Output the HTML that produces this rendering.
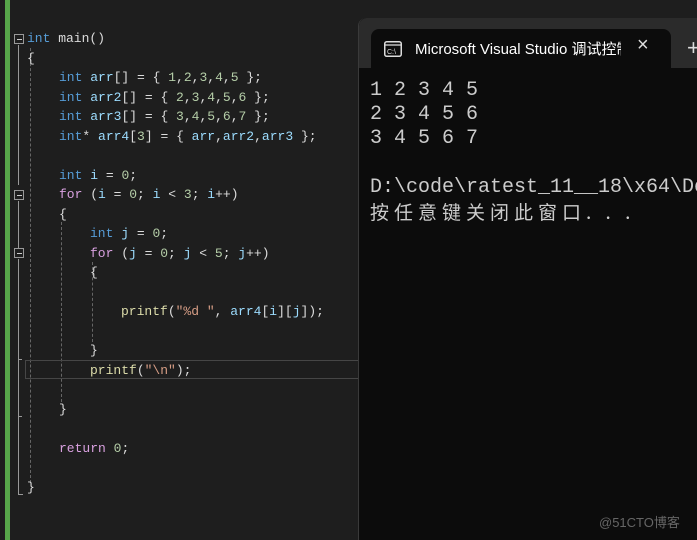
<!DOCTYPE html>
<html><head><meta charset="utf-8"><style>
body{margin:0;width:697px;height:540px;background:#1e1e1e;overflow:hidden;position:relative;font-family:"Liberation Mono","Noto Sans CJK SC",monospace}
.g{position:absolute;left:5px;top:0;width:5px;height:540px;background:#57a64a}
.l{position:absolute;font-size:13px;line-height:19.5px;white-space:pre;color:#dcdcdc}
.k{color:#569cd6}.v{color:#9cdcfe}.n{color:#b5cea8}.c{color:#d8a0df}.f{color:#dcdcaa}.s{color:#d69d85}
.fb{position:absolute;left:14px;width:8px;height:8px;border:1px solid #999;box-sizing:content-box}
.fb:after{content:"";position:absolute;left:2px;top:4px;width:5px;height:1px;background:#ccc}
.vl{position:absolute;width:1px;background:#999}
.dl{position:absolute;width:0;border-left:1px dashed #666}
.win{position:absolute;left:358px;top:18px;width:339px;height:522px;background:#0c0c0c;border-left:1px solid #3a3a3a;border-radius:8px 0 0 0;overflow:hidden}
.tb{position:absolute;left:0;top:0;right:0;height:50px;background:#2b2b2b;border-radius:8px 0 0 0}
.tab{position:absolute;left:12px;top:11px;width:300px;height:39px;background:#0c0c0c;border-radius:8px 8px 0 0}
.t{position:absolute;left:11px;font-size:20px;line-height:24px;color:#cccccc;white-space:pre}
</style></head><body>
<div class="g"></div>
<div class="fb" style="top:34px"></div>
<div class="vl" style="left:18px;top:45px;height:140px"></div>
<div class="fb" style="top:190px"></div>
<div class="vl" style="left:18px;top:201px;height:48px"></div>
<div class="fb" style="top:248px"></div>
<div class="vl" style="left:18px;top:259px;height:100px"></div>
<div style="position:absolute;left:18px;top:359px;width:4px;height:1px;background:#999"></div>
<div class="vl" style="left:18px;top:359px;height:58px"></div>
<div style="position:absolute;left:18px;top:416px;width:4px;height:1px;background:#999"></div>
<div class="vl" style="left:18px;top:416px;height:78px"></div>
<div style="position:absolute;left:18px;top:494px;width:5px;height:1px;background:#999"></div>
<div class="dl" style="left:30px;top:48px;height:435px"></div>
<div class="dl" style="left:61px;top:222px;height:180px"></div>
<div class="dl" style="left:92px;top:262px;height:80px"></div>
<div style="position:absolute;left:25px;top:360px;width:340px;height:17px;border:1px solid #464646"></div>
<div class="l" style="left:27px;top:29px"><span class="k">int</span> main()</div>
<div class="l" style="left:27px;top:48.5px">{</div>
<div class="l" style="left:59px;top:68px"><span class="k">int</span> <span class="v">arr</span>[] = { <span class="n">1</span>,<span class="n">2</span>,<span class="n">3</span>,<span class="n">4</span>,<span class="n">5</span> };</div>
<div class="l" style="left:59px;top:87.5px"><span class="k">int</span> <span class="v">arr2</span>[] = { <span class="n">2</span>,<span class="n">3</span>,<span class="n">4</span>,<span class="n">5</span>,<span class="n">6</span> };</div>
<div class="l" style="left:59px;top:107px"><span class="k">int</span> <span class="v">arr3</span>[] = { <span class="n">3</span>,<span class="n">4</span>,<span class="n">5</span>,<span class="n">6</span>,<span class="n">7</span> };</div>
<div class="l" style="left:59px;top:126.5px"><span class="k">int</span>* <span class="v">arr4</span>[<span class="n">3</span>] = { <span class="v">arr</span>,<span class="v">arr2</span>,<span class="v">arr3</span> };</div>
<div class="l" style="left:59px;top:165.5px"><span class="k">int</span> <span class="v">i</span> = <span class="n">0</span>;</div>
<div class="l" style="left:59px;top:185px"><span class="c">for</span> (<span class="v">i</span> = <span class="n">0</span>; <span class="v">i</span> &lt; <span class="n">3</span>; <span class="v">i</span>++)</div>
<div class="l" style="left:59px;top:204.5px">{</div>
<div class="l" style="left:90px;top:224px"><span class="k">int</span> <span class="v">j</span> = <span class="n">0</span>;</div>
<div class="l" style="left:90px;top:243.5px"><span class="c">for</span> (<span class="v">j</span> = <span class="n">0</span>; <span class="v">j</span> &lt; <span class="n">5</span>; <span class="v">j</span>++)</div>
<div class="l" style="left:90px;top:263px">{</div>
<div class="l" style="left:121px;top:302px"><span class="f">printf</span>(<span class="s">"%d "</span>, <span class="v">arr4</span>[<span class="v">i</span>][<span class="v">j</span>]);</div>
<div class="l" style="left:90px;top:341px">}</div>
<div class="l" style="left:90px;top:360.5px"><span class="f">printf</span>(<span class="s">"\n"</span>);</div>
<div class="l" style="left:59px;top:399.5px">}</div>
<div class="l" style="left:59px;top:438.5px"><span class="c">return</span> <span class="n">0</span>;</div>
<div class="l" style="left:27px;top:477.5px">}</div>
<div class="win">
<div class="tb"><div class="tab">
<svg style="position:absolute;left:13px;top:12px" width="18" height="16" viewBox="0 0 18 16"><rect x="0.75" y="0.75" width="16.5" height="14.5" rx="2" fill="none" stroke="#ddd" stroke-width="1.5"/><line x1="1" y1="4" x2="17" y2="4" stroke="#ddd" stroke-width="1.2"/><text x="3" y="13" font-size="7" fill="#ddd" font-family="Liberation Sans">C:\</text></svg>
<div style="position:absolute;left:44px;top:9px;font-family:'Liberation Sans','Noto Sans CJK SC',sans-serif;font-size:15px;color:#fff;width:206px;overflow:hidden;white-space:nowrap">Microsoft Visual Studio 调试控制台</div>
<div style="position:absolute;left:266px;top:5px;font-family:'Liberation Sans',sans-serif;font-size:20px;color:#ddd">×</div>
</div>
<div style="position:absolute;left:328px;top:17px;font-family:'Liberation Sans';font-size:22px;color:#ddd">+</div>
</div>
<div class="t" style="top:61px">1 2 3 4 5</div>
<div class="t" style="top:85px">2 3 4 5 6</div>
<div class="t" style="top:109px">3 4 5 6 7</div>
<div class="t" style="top:158px">D:\code\ratest_11__18\x64\Debug</div>
<div class="t" style="top:182px;font-family:'Noto Sans CJK SC',sans-serif;font-size:19px;letter-spacing:5px">按任意键关闭此窗口. . .</div>
<div style="position:absolute;left:240px;top:494px;font-family:'Liberation Sans','Noto Sans CJK SC',sans-serif;font-size:13px;color:#666">@51CTO博客</div>
</div>
</body></html>
